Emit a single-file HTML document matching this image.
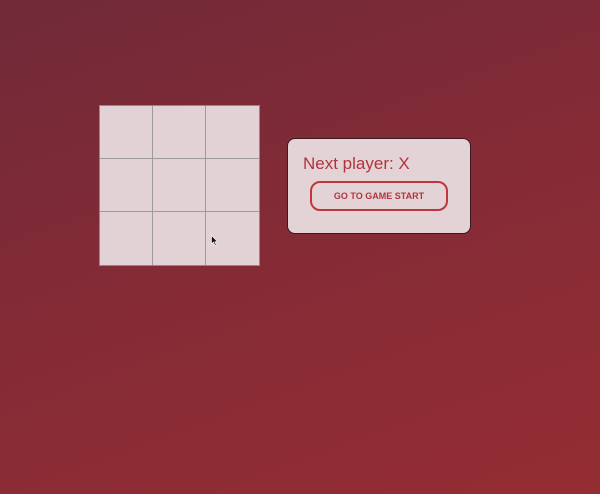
<!DOCTYPE html>
<html><head><style>
html,body{margin:0;width:600px;height:494px;overflow:hidden}
body{background:linear-gradient(160deg,#712a38 0%,#852b36 50%,#952d33 100%);font-family:"Liberation Sans",sans-serif;position:relative}
.board{position:absolute;left:99px;top:105px;width:161px;height:161px;background:#e2d2d6;border:1px solid #8d8a8b;box-sizing:border-box;display:grid;grid-template-columns:53px 53px 53px;grid-template-rows:53px 53px 53px}
.board div{border-right:1px solid #9e9a9c;border-bottom:1px solid #9e9a9c}
.board div:nth-child(3n){border-right:none}
.board div:nth-child(n+7){border-bottom:none}
.panel{position:absolute;left:287px;top:138px;width:184px;height:96px;box-sizing:border-box;background:#e4d3d6;border:1px solid #3a1a1e;border-radius:8px}
.t{position:absolute;left:15px;top:15px;font-size:17px;color:#b0343d}
.btn{position:absolute;left:22px;top:42px;width:138px;height:30px;box-sizing:border-box;border:2px solid #c0363d;border-radius:10px;font-size:9px;font-weight:bold;color:#b0343d;text-align:center;line-height:26px}
</style></head><body>
<div class="board"><div></div><div></div><div></div><div></div><div></div><div></div><div></div><div></div><div></div></div>
<svg style="position:absolute;left:211px;top:235px" width="8" height="12" viewBox="0 0 8 12"><path d="M0.5 0.5 L0.5 9 L2.5 7 L4 10.5 L5.2 10 L3.8 6.7 L6.5 6.7 Z" fill="#111" stroke="#fff" stroke-width="0.6"/></svg>
<div class="panel"><div class="t">Next player: X</div><div class="btn">GO TO GAME START</div></div>
</body></html>
